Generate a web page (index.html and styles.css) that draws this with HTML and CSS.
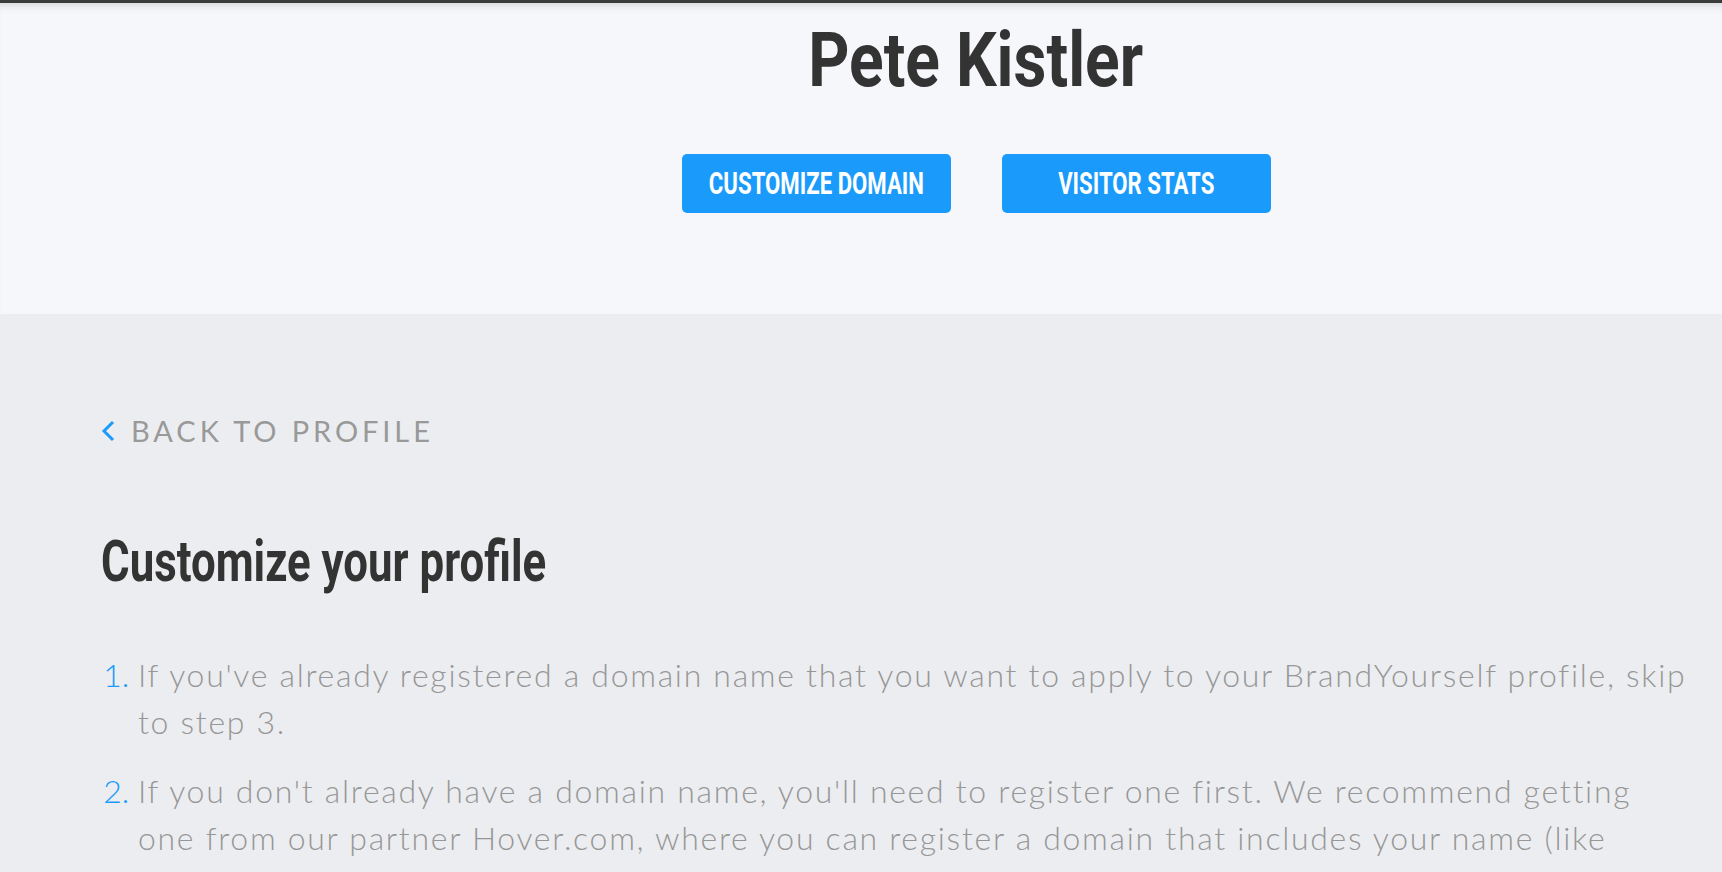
FILE: index.html
```html
<!DOCTYPE html>
<html lang="en">
  <head>
    <meta charset="UTF-8" />
    <meta name="viewport" content="width=device-width, initial-scale=1.0" />
    <title>Pete Kistler - Customize your profile</title>
    <link rel="stylesheet" href="styles.css">
  </head>
  <body>
    <header class="hero">
      <div class="hero-inner">
        <h1 class="profile-name"><span class="squeeze">Pete Kistler</span></h1>
        <div class="hero-actions">
          <a href="#" class="btn"><span class="squeeze">Customize Domain</span></a>
          <a href="#" class="btn"><span class="squeeze">Visitor Stats</span></a>
        </div>
      </div>
    </header>

    <main class="content">
      <a href="#" class="back-link">
        <svg class="back-icon" width="14" height="22" viewBox="0 0 14 22">
          <polyline points="12,2 3,11 12,20" fill="none" stroke="#1a9bfc" stroke-width="3" />
        </svg>
        <span>Back to profile</span>
      </a>

      <h2 class="section-title"><span class="squeeze">Customize your profile</span></h2>

      <ol class="steps">
        <li>
          If you've already registered a domain name that you want to apply to your BrandYourself profile, skip to step 3.
        </li>
        <li>
          If you don't already have a domain name, you'll need to register one first. We recommend getting one from our partner Hover.com, where you can register a domain that includes your name (like petekistler.com) in just a few minutes.
        </li>
      </ol>
    </main>
  </body>
</html>
```

FILE: styles.css
```css
body {
  font-family: Lato, "Open Sans", sans-serif;
  background-color: #ecedf0;
  margin: 0;
  padding: 0;
}

.hero {
  background-color: #f6f7fb;
  border-top: 3px solid #3a3a3a;
  box-shadow: inset 0 8px 8px -6px rgba(0, 0, 0, 0.15);
  height: 311px;
}

.hero-inner {
  padding-left: 230px;
  display: flex;
  flex-direction: column;
  align-items: center;
}

.profile-name,
.section-title,
.btn {
  font-family: Roboto, "Liberation Sans", sans-serif;
  font-weight: bold;
}

/* no condensed face installed, so squeeze the bold one */
.squeeze {
  display: inline-block;
  white-space: nowrap;
}

.profile-name {
  margin: 19px 0 0;
  font-size: 76px;
  line-height: 76px;
  color: #333;
}

.profile-name .squeeze {
  transform: scaleX(0.843);
}

.hero-actions {
  display: flex;
  gap: 51px;
  margin-top: 56px;
}

.btn {
  width: 269px;
  height: 59px;
  display: flex;
  align-items: center;
  justify-content: center;
  background-color: #1a9bfc;
  color: #fff;
  border-radius: 5px;
  text-decoration: none;
  text-transform: uppercase;
  font-size: 31px;
}

.btn .squeeze {
  transform: scaleX(0.715);
}

.content {
  padding: 99px 27px 0 101px;
}

.back-link {
  display: inline-flex;
  align-items: center;
  gap: 16px;
  color: #999;
  text-decoration: none;
  text-transform: uppercase;
  letter-spacing: 3.9px;
  font-size: 29px;
  line-height: 35px;
}

.section-title {
  margin: 84px 0 0;
  font-size: 58px;
  line-height: 58px;
  color: #333;
}

.section-title .squeeze {
  transform: scaleX(0.755);
  transform-origin: left center;
}

.steps {
  margin: 61px 0 0;
  padding-left: 37px;
  color: #979797;
  font-size: 32px;
  font-weight: 300;
  letter-spacing: 1.7px;
  line-height: 47px;
}

.steps li {
  margin-bottom: 22px;
}

.steps li::marker {
  color: #1a9bfc;
  letter-spacing: 0;
}
```
